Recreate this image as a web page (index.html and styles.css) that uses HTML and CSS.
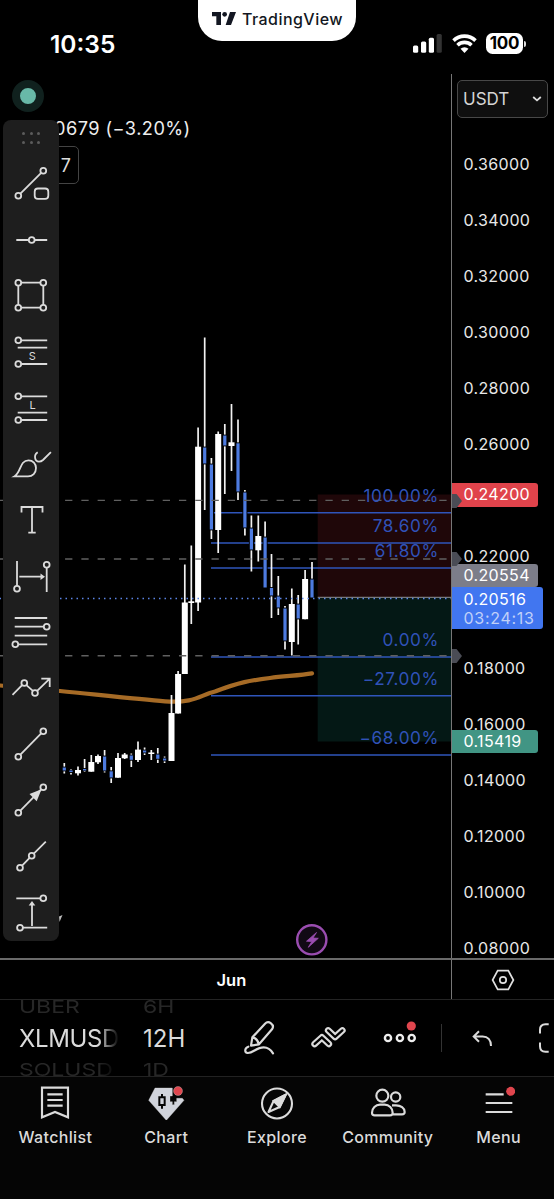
FILE: index.html
```
<!DOCTYPE html>
<html lang="en">
<head>
    <meta charset="UTF-8">
    <meta name="viewport" content="width=device-width, initial-scale=1.0">
    <title>XLMUSDT - TradingView</title>
    <link rel="stylesheet" href="styles.css">
</head>
<body>
    <div class="app">
        <header class="status-bar">
            <div class="time">10:35</div>
            <div class="brand">
                <svg width="24" height="13" viewBox="0 0 72 39"><path d="M0 0h27v39H13V13H0zM54 0h18L57 39H41z"/><circle cx="38" cy="7" r="7"/></svg>
                <span>TradingView</span>
            </div>
            <div class="indicators">
                <svg width="29" height="19" viewBox="0 0 29 19" fill="#fff">
                    <rect x="0" y="11.5" width="5.2" height="7.2" rx="1.5"/>
                    <rect x="8" y="7.5" width="5.2" height="11.2" rx="1.5"/>
                    <rect x="15.8" y="3.8" width="5.2" height="14.9" rx="1.5"/>
                    <rect x="23.6" y="0" width="5.2" height="18.7" rx="1.5" fill="#333"/>
                </svg>
                <svg class="wifi" width="25" height="19" viewBox="0 0 25 19" fill="none" stroke="#fff" stroke-width="3.6">
                    <path d="M1.5 6.6a15.8 15.8 0 0 1 22 0M5.5 11.2a10.2 10.2 0 0 1 14 0"/>
                    <path d="M12.5 18.9l-4-4.100a5.8 5.8 0 0 1 8 0z" fill="#fff" stroke="none"/>
                </svg>
                <div class="battery">100</div>
            </div>
        </header>

        <main class="chart">
            <div class="plot">
                <svg id="plot" width="451" height="884" viewBox="0 74 451 884">
                    <rect class="zone-stop" x="317.7" y="494.5" width="133.3" height="103"/>
                    <rect class="zone-target" x="317.7" y="598" width="133.3" height="143.5"/>
                    <path class="average" d="M0 685.5 C20 687 40 689 60 691 C100 695 140 699.5 165 701.3 C195 703.5 200 695 215 691.5 C240 682 250 680.5 270 678 C285 676 300 675.5 312 673.4"/>
                    <path class="fib-lines" d="M211 512.7H451M211 543.1H451M211 567.9H451M211 657H451M211 695.8H451M211 754.9H451"/>
                    <path class="entry" d="M317.7 597.4H451"/>
                    <g id="candles"></g>
                    <path class="alert-lines" d="M0 500.4H451M0 559H451M0 655.8H451"/>
                    <path class="last-price" d="M-.5 598.4H451"/>
                    <g class="fib-labels">
                        <text x="439" y="501.8">100.00%</text>
                        <text x="439" y="532.3">78.60%</text>
                        <text x="439" y="557.3">61.80%</text>
                        <text x="439" y="646">0.00%</text>
                        <text x="439" y="685">−27.00%</text>
                        <text x="439" y="744.2">−68.00%</text>
                    </g>
                    <circle cx="311.8" cy="939.8" r="14.6" fill="#110914" stroke="#9a4db0" stroke-width="2.4"/>
                    <path d="M316.5 932.5l-10 8.700 5.300.3-3.500 5.800 10-9-5.300-.3z" fill="#9a4db0" stroke="#9a4db0" stroke-width=".8"/>
                    <path d="M59 916.5l3.5-1.500-3 7z" fill="#bbb"/>
                </svg>
                <div class="live-dot"></div>
                <div class="change">0679 (−3.20%)</div>
                <div class="indicator-count">7</div>
            </div>

            <aside class="price-axis">
                <div class="currency">
                    <span>USDT</span>
                    <svg width="10" height="6" viewBox="0 0 10 6"><path d="M1.2 1l3.8 3.4L8.8 1" fill="none" stroke="#ddd" stroke-width="1.8"/></svg>
                </div>
                <div class="prices">
                    <span>0.36000</span>
                    <span>0.34000</span>
                    <span>0.32000</span>
                    <span>0.30000</span>
                    <span>0.28000</span>
                    <span>0.26000</span>
                    <span></span>
                    <span>0.22000</span>
                    <span></span>
                    <span>0.18000</span>
                    <span>0.16000</span>
                    <span>0.14000</span>
                    <span>0.12000</span>
                    <span>0.10000</span>
                    <span>0.08000</span>
                </div>
                <div class="tag tag-stop">0.24200</div>
                <div class="tag tag-entry">0.20554</div>
                <div class="tag tag-last">0.20516<span>03:24:13</span></div>
                <div class="tag tag-target">0.15419</div>
                <i class="marker marker-high"></i>
                <i class="marker marker-mid"></i>
                <i class="marker marker-low"></i>
            </aside>

            <div class="draw-tools">
                <div class="grip"><i></i><i></i><i></i><i></i><i></i><i></i></div>
                <svg viewBox="0 0 56 56"><path d="M17.4 37.6L38.2 16.8"/><circle cx="40.3" cy="14.7" r="2.9"/><circle cx="15.3" cy="39.7" r="2.9"/><rect x="31.7" y="32.5" width="13.6" height="10.4" rx="3.2"/></svg>
                <svg viewBox="0 0 56 56"><path d="M13.3 28h12.4M31.6 28h12.6"/><circle cx="28.7" cy="28" r="2.9"/></svg>
                <svg viewBox="0 0 56 56"><path d="M18.2 14.7h19.2M18.2 39.7h19.2M15.3 17.6v19.2M40.3 17.6v19.2"/><circle cx="15.3" cy="14.7" r="2.9"/><circle cx="40.3" cy="14.7" r="2.9"/><circle cx="15.3" cy="39.7" r="2.9"/><circle cx="40.3" cy="39.7" r="2.9"/></svg>
                <svg viewBox="0 0 56 56"><path d="M18.2 16.3h26M14.7 23.7h29.5M18.2 40h26"/><circle cx="15.3" cy="16.3" r="2.9"/><circle cx="15.3" cy="40" r="2.9"/><text x="29.4" y="36.3">S</text></svg>
                <svg viewBox="0 0 56 56"><path d="M18.2 16.3h26M14.7 32.7h29.5M18.2 40h26"/><circle cx="15.3" cy="16.3" r="2.9"/><circle cx="15.3" cy="40" r="2.9"/><text x="29.6" y="28.8">L</text></svg>
                <svg viewBox="0 0 56 56"><path d="M11.3 40.4C18.5 36 16.5 24.4 25.5 24.4c4.5 0 7.5 3.2 7.5 7.6 0 4.9-3.4 8.4-8 8.4zM34.7 16.3C30.5 19 31.5 25.5 36 25.7c1.8 0 2.900-.7 4-1.7l7.9-7.9"/></svg>
                <svg viewBox="0 0 56 56"><path d="M18.5 20.500V15h21v5.500M29 15v25.600M25.300 40.600h7.400"/></svg>
                <svg viewBox="0 0 56 56"><path d="M14 13v24.800M43.700 19.600V44M16.300 28.700H38"/><path class="solid" d="M37.500 25.500l4.500 3.200-4.500 3.200z"/><circle cx="14" cy="40.7" r="2.9"/><circle cx="43.7" cy="16.7" r="2.9"/></svg>
                <svg viewBox="0 0 56 56"><path d="M11.7 14h32.500M11.700 22.700h29M11.700 31.700h32.500M15.200 40.300h29"/><circle cx="43.7" cy="22.7" r="2.9"/><circle cx="12.3" cy="40.3" r="2.9"/></svg>
                <svg viewBox="0 0 56 56"><path d="M9.500 34.800l9.600-9.600M23.400 25.100l6.500 5.800M34.200 30.900L46.500 18.900M38.300 18.700h8.400V27"/><circle cx="21.3" cy="23" r="2.9"/><circle cx="32" cy="33" r="2.9"/></svg>
                <svg viewBox="0 0 56 56"><path d="M17.400 38.600l20.800-21.200"/><circle cx="15.3" cy="40.7" r="2.9"/><circle cx="40.3" cy="15.3" r="2.9"/></svg>
                <svg viewBox="0 0 56 56"><path d="M17.400 38.600l20.800-21.200"/><path class="solid" d="M38.500 17.300l-12 4.800 7.200 7.200z"/><circle cx="15.3" cy="40.7" r="2.9"/><circle cx="40.3" cy="15.3" r="2.9"/></svg>
                <svg viewBox="0 0 56 56"><path d="M19.100 37.600l7.500-7.700M30.800 25.600l12-12"/><circle cx="17" cy="39.7" r="2.9"/><circle cx="28.7" cy="27.7" r="2.9"/></svg>
                <svg viewBox="0 0 56 56"><path d="M13.300 14.300h24.100M19.900 43.700h24.300M29 42V20"/><path class="solid" d="M29 17l-3.300 4.500h6.600z"/><circle cx="40.3" cy="14.3" r="2.9"/><circle cx="17" cy="43.7" r="2.9"/></svg>
            </div>
        </main>

        <div class="time-axis">
            <div class="dates">Jun</div>
            <div class="axis-settings">
                <svg width="24" height="22" viewBox="0 0 24 22" fill="none" stroke="#e0e0e0" stroke-width="1.7"><path d="M6.700 1.700h10.600L22.400 11l-5.100 9.300H6.700L1.600 11z"/><circle cx="12" cy="11" r="3.2"/></svg>
            </div>
        </div>

        <div class="toolbar">
            <div class="picker symbol-picker">
                <span class="faded above">UBER</span>
                <span class="current">XLMUSD</span>
                <span class="faded below">SOLUSD</span>
            </div>
            <div class="picker interval-picker">
                <span class="faded above">6H</span>
                <span class="current">12H</span>
                <span class="faded below">1D</span>
            </div>
            <div class="actions">
                <svg class="pencil" width="32" height="36" viewBox="0 0 96 108" stroke-width="6.5" stroke-linejoin="round" stroke-linecap="round"><path d="M28 52L66 11q8-8 18-1 10 8 3 18L48 73l-24 4zM28 52q14 2 20 21M16 80C4 84 4 98 14 99c16 1 26-17 48-17 14 0 22 8 28 18"/></svg>
                <svg class="indicators-icon" width="37" height="24" viewBox="0 0 112 72">
                    <g stroke-linecap="round" stroke-linejoin="round">
                        <path d="M14 57l22-20 21 20" stroke-width="20"/><path d="M14 57l22-20 21 20" stroke-width="7" stroke="#000"/>
                        <path d="M55 16l21 20 22-20" stroke-width="20"/><path d="M55 16l21 20 22-20" stroke-width="7" stroke="#000"/>
                    </g>
                </svg>
                <svg class="more" width="34" height="28" viewBox="0 0 34 28" stroke-width="2.4"><circle cx="5" cy="18" r="3.1"/><circle cx="16.9" cy="18" r="3.1"/><circle cx="28.7" cy="18" r="3.1"/><circle cx="28.3" cy="6" r="4.6" fill="#e0464e" stroke="none"/></svg>
                <i class="divider"></i>
                <svg class="undo" width="20" height="17" viewBox="0 0 20 17" stroke-width="2"><path d="M7 1.300L1.700 6.500 7 11.700M1.700 6.500h9c5 0 8.300 3.500 8.300 9.500"/></svg>
                <svg class="fullscreen" width="10" height="30" viewBox="0 0 10 30" stroke-width="2"><path d="M9.700 1.200H6.500Q1 1.200 1 6.700V10.500M1 19.500v3.800q0 5.500 5.500 5.500h3.200"/></svg>
            </div>
        </div>

        <nav class="bottom-nav">
            <a>
                <svg width="30" height="35" viewBox="0 0 90 105" stroke-width="6.5"><path d="M6 8v89l39-16 39 16V8zM22 28h46M22 45h46M22 62h46"/></svg>
                <span>Watchlist</span>
            </a>
            <a>
                <svg width="38" height="35" viewBox="0 0 114 105" stroke="none">
                    <path d="M24 9h52v24h-7v17h7v9h6V50h7V40h17l5 6-53 60L5 46z" fill="#d1d4dc"/>
                    <path d="M45 27v10M45 61v10M37 37h16v23H37z" fill="none" stroke="#050505" stroke-width="6"/>
                    <circle cx="93" cy="18" r="13.5" fill="#e0464e"/>
                </svg>
                <span>Chart</span>
            </a>
            <a>
                <svg width="34" height="35" viewBox="0 0 34 35" stroke-width="2.1"><circle cx="17" cy="18.5" r="15"/><path d="M25.700 9.800L13.600 16 8.500 27l11.200-5z" stroke-linejoin="round"/><path d="M25.700 9.800L13.600 16l6.100 6z" fill="#dbdbdb"/></svg>
                <span>Explore</span>
            </a>
            <a>
                <svg width="36" height="35" viewBox="0 0 108 105" stroke-width="6.5"><circle cx="37" cy="32" r="18"/><circle cx="77" cy="36" r="14"/><path d="M14 91h46q8 0 8-8c0-14-11-24-24-24H30C17 59 6 69 6 83q0 8 8 8zM66 61h12c14 0 26 8 26 20q0 7-8 7H68"/></svg>
                <span>Community</span>
            </a>
            <a>
                <svg width="32" height="35" viewBox="0 0 96 105" stroke-width="6.5"><path d="M8 28h54M8 54h80M8 81h80"/><circle cx="83" cy="19" r="13.5" fill="#e0464e" stroke="none"/></svg>
                <span>Menu</span>
            </a>
        </nav>
    </div>

    <script src="chart.js"></script>
</body>
</html>
```
FILE: styles.css
```
* {
    box-sizing: border-box;
    margin: 0;
    padding: 0;
}

body {
    background-color: #000;
    color: #fff;
    font-family: Inter, 'Liberation Sans', sans-serif;
    overflow: hidden;
}

svg {
    display: block;
}

.app {
    width: 554px;
    height: 1199px;
    display: flex;
    flex-direction: column;
}

/* Status bar */
.status-bar {
    height: 74px;
    display: grid;
    grid-template-columns: 198px 158px 198px;
}

.time {
    padding: 29px 0 0 50px;
    font-size: 24.5px;
    line-height: 30px;
    font-weight: 600;
}

.brand {
    height: 41px;
    display: flex;
    align-items: center;
    padding: 0 0 4px 14px;
    gap: 6px;
    background-color: #fff;
    border-radius: 0 0 24px 24px;
    color: #131722;
    font-size: 16px;
    font-weight: 500;
    letter-spacing: 0.45px;
}

.brand svg {
    fill: #131722;
}

.indicators {
    display: flex;
    align-items: center;
    height: 21px;
    margin: 33px 0 0 57px;
}

.wifi {
    margin: 0 9px 0 10px;
}

.battery {
    position: relative;
    width: 37px;
    height: 21px;
    border-radius: 6.5px;
    background-color: #fff;
    color: #000;
    font-size: 17px;
    line-height: 21px;
    font-weight: 700;
    text-align: center;
    letter-spacing: -0.2px;
}

.battery::after {
    content: "";
    position: absolute;
    right: -3px;
    top: 8px;
    width: 2px;
    height: 6px;
    border-radius: 0 2px 2px 0;
    background-color: #ddd;
}

/* Chart */
.chart {
    position: relative;
    height: 884px;
    display: flex;
}

.plot {
    position: relative;
    width: 451px;
}

.zone-stop {
    fill: #1f0709;
}

.zone-target {
    fill: #041815;
}

.average {
    fill: none;
    stroke: #a66b26;
    stroke-width: 4.2;
    stroke-linecap: round;
}

.fib-lines {
    stroke: #2f55bb;
    stroke-width: 1.5;
}

.entry {
    stroke: #777;
    stroke-width: 1.3;
}

.alert-lines {
    stroke: #606060;
    stroke-width: 1.4;
    stroke-dasharray: 7.3 8.97;
}

.last-price {
    stroke: #5b84e6;
    stroke-width: 1.5;
    stroke-dasharray: 1.5 4;
}

.fib-labels {
    fill: #3052b8;
    font-size: 17.2px;
    letter-spacing: 0.6px;
    text-anchor: end;
}

.candle-up {
    fill: #fff;
}

.candle-down {
    fill: #4d7be0;
    stroke: #000;
    stroke-width: 1.8;
    paint-order: stroke;
}

.wick {
    stroke: #f2f2f2;
    stroke-width: 1.7;
}

.live-dot {
    position: absolute;
    left: 12px;
    top: 6px;
    width: 32px;
    height: 32px;
    border-radius: 50%;
    border: 8.5px solid #10211e;
    background-color: #68b9a8;
}

.change {
    position: absolute;
    left: 54px;
    top: 42px;
    font-size: 18.2px;
    line-height: 24px;
    letter-spacing: 0.45px;
    white-space: nowrap;
    color: #eee;
}

.indicator-count {
    position: absolute;
    left: 20px;
    top: 72px;
    width: 59px;
    height: 38px;
    padding-right: 7px;
    border: 1px solid #444;
    border-radius: 5px;
    font-size: 18px;
    line-height: 37px;
    text-align: right;
    color: #ddd;
}

/* Price axis */
.price-axis {
    position: relative;
    width: 103px;
    height: 884px;
    border-left: 1.5px solid #777;
    overflow: hidden;
    font-size: 16px;
    letter-spacing: 0.35px;
}

.currency {
    display: flex;
    align-items: center;
    justify-content: space-between;
    width: 91px;
    height: 38px;
    margin: 6px 0 0 5px;
    padding: 0 5px 0 5px;
    border: 1.5px solid #484848;
    border-radius: 5px;
    background-color: #0f0f0f;
    color: #d5d5d5;
    font-size: 17px;
    letter-spacing: 0;
}

.prices {
    display: flex;
    flex-direction: column;
    padding: 18px 0 0 11.5px;
}

.prices span {
    height: 56px;
    flex: none;
    line-height: 56px;
    color: #e8e8e8;
}

.tag {
    position: absolute;
    left: 0;
    width: 86px;
    height: 23px;
    padding-left: 11.5px;
    border-radius: 0 3px 3px 0;
    line-height: 23px;
}

.tag-stop {
    top: 409px;
    height: 24px;
    background-color: #e0434b;
}

.tag-entry {
    top: 490px;
    background-color: #7c7d89;
}

.tag-last {
    top: 513px;
    width: 91px;
    height: 42px;
    line-height: 24px;
    background-color: #4176f0;
}

.tag-last span {
    display: block;
    line-height: 15px;
    letter-spacing: 0.7px;
    color: #c0d0f8;
}

.tag-target {
    top: 656px;
    background-color: #419584;
}

.marker {
    position: absolute;
    left: 0;
    width: 10px;
    height: 14px;
    background-color: #4a4c55;
    clip-path: polygon(0 0, 45% 0, 100% 50%, 45% 100%, 0 100%);
}

.marker-high {
    top: 420px;
}

.marker-mid {
    top: 478px;
}

.marker-low {
    top: 575px;
}

/* Floating drawing tools */
.draw-tools {
    position: absolute;
    left: 3px;
    top: 46px;
    width: 56px;
    height: 821px;
    border-radius: 8px;
    background-color: #1e1e1e;
}

.draw-tools svg {
    width: 56px;
    height: 56px;
    fill: none;
    stroke: #dbdbdb;
    stroke-width: 1.8;
}

.draw-tools .solid {
    fill: #dbdbdb;
    stroke: none;
}

.draw-tools text {
    fill: #dbdbdb;
    stroke: none;
    font-size: 11px;
    text-anchor: middle;
}

.grip {
    display: grid;
    grid-template-columns: repeat(3, 3px);
    align-content: start;
    gap: 6px 4.6px;
    height: 36px;
    padding: 12px 0 0 19px;
}

.grip i {
    width: 3px;
    height: 3px;
    border-radius: 50%;
    background-color: #5c5c5c;
}

/* Time axis */
.time-axis {
    display: flex;
    height: 42px;
    border-top: 2px solid #6a6a6a;
    border-bottom: 1px solid #242424;
}

.dates {
    width: 451px;
    padding-left: 216.5px;
    font-size: 16.5px;
    line-height: 40px;
    font-weight: 600;
}

.axis-settings {
    width: 103px;
    padding: 9px 0 0 39px;
    border-left: 1.5px solid #777;
}

/* Toolbar */
.toolbar {
    height: 77px;
    display: flex;
    border-bottom: 1px solid #222;
    overflow: hidden;
}

.picker {
    display: flex;
    flex-direction: column;
    padding-left: 19px;
    width: 143px;
    font-size: 24px;
    color: #dbdbdb;
    white-space: nowrap;
}

.picker span {
    display: block;
    flex: none;
}

.picker .current {
    height: 42px;
    line-height: 44px;
    letter-spacing: -0.4px;
}

.picker .faded {
    font-size: 23px;
    color: #272727;
    transform: scaleY(0.78);
    height: 19px;
    line-height: 19px;
}

.picker .above {
    margin-top: -2px;
}

.picker .below {
    margin-top: 2px;
}

.symbol-picker {
    -webkit-mask-image: linear-gradient(to right, #000 98px, transparent 119px);
    mask-image: linear-gradient(to right, #000 98px, transparent 119px);
}

.interval-picker {
    width: 100px;
    padding-left: 0;
}

.interval-picker .current {
    letter-spacing: 0.1px;
}

.actions {
    display: flex;
    align-items: flex-start;
    width: 311px;
    fill: none;
    stroke: #dbdbdb;
}

.actions svg {
    flex: none;
}

.pencil {
    margin-top: 20px;
}

.indicators-icon {
    margin: 25px 0 0 35px;
}

.more {
    margin: 20px 0 0 36px;
    stroke: #eee;
}

.divider {
    width: 1px;
    height: 28px;
    margin: 24px 0 0 24px;
    background-color: #333;
}

.undo {
    margin: 30px 0 0 30px;
}

.fullscreen {
    margin: 23px 0 0 47px;
}

/* Bottom navigation */
.bottom-nav {
    flex: 1;
    display: flex;
    padding-top: 8px;
    background-color: #050505;
}

.bottom-nav a {
    flex: 1 1 0;
    display: flex;
    flex-direction: column;
    align-items: center;
    gap: 7px;
    font-size: 16px;
    line-height: 20px;
    font-weight: 500;
    letter-spacing: 0.35px;
    color: #dbdbdb;
}

.bottom-nav svg {
    fill: none;
    stroke: #dbdbdb;
}
```
FILE: chart.js
```
const SVG_NS = 'http://www.w3.org/2000/svg';

// x, high, body top, body bottom, low, direction
const candles = [
    [64.3, 763, 767.5, 770.5, 773.5, 'down'],
    [71, 769, 770.5, 772, 774.5, 'down'],
    [78, 766.5, 770, 773.3, 775.5, 'up'],
    [84.6, 759, 769, 770.5, 772, 'down'],
    [91.3, 755, 762, 771.7, 771.7, 'up'],
    [98, 754.5, 756, 762.3, 764, 'up'],
    [104.6, 750, 756.5, 770.5, 772.5, 'down'],
    [111.2, 767, 771.3, 777.5, 783, 'down'],
    [118, 753, 758, 777.7, 777.7, 'up'],
    [124.7, 753, 754.5, 758.3, 759, 'up'],
    [131.3, 753.5, 755.5, 759.8, 767, 'down'],
    [138, 741.5, 749.6, 760, 762, 'up'],
    [144.6, 747.5, 750.5, 752.5, 755, 'down'],
    [151.3, 750, 752.5, 754, 760, 'up'],
    [157.8, 748, 754.5, 758.8, 763, 'down'],
    [164.6, 756.5, 758.5, 760.5, 763, 'down'],
    [171.5, 695, 713, 761, 761, 'up'],
    [178.1, 671, 674, 713.5, 713.5, 'up'],
    [184.8, 564.5, 602.5, 674, 674, 'up'],
    [191.3, 545.5, 601.3, 603, 624, 'up'],
    [198.1, 427.5, 446.7, 602.5, 611, 'up'],
    [204.7, 337.5, 447.5, 463.5, 510, 'down'],
    [211.4, 458, 464.5, 529.5, 539, 'down'],
    [218.2, 431.5, 434, 530, 553, 'up'],
    [224.8, 424, 435.5, 445.5, 494, 'down'],
    [231.5, 404, 442.3, 446, 471, 'up'],
    [238, 419.5, 443.3, 491.5, 500, 'down'],
    [244.9, 490, 492.5, 527.5, 535.5, 'down'],
    [251.4, 515.5, 528.5, 549.5, 571.5, 'down'],
    [258.3, 515.5, 536, 550.3, 561.5, 'up'],
    [265.1, 521.5, 537.5, 587.5, 587.5, 'down'],
    [271.5, 554, 588, 595.5, 618, 'down'],
    [278.3, 576, 596.5, 607.5, 615, 'down'],
    [285, 606, 608.5, 640.5, 649.5, 'down'],
    [291.8, 588.5, 604, 642, 655.5, 'up'],
    [298.2, 595, 604.5, 618.5, 644.5, 'down'],
    [305.1, 570, 579, 619.2, 619.2, 'up'],
    [312, 562, 579.5, 597.5, 597.5, 'down']
];

const group = document.getElementById('candles');

function add(name, attrs) {
    const el = document.createElementNS(SVG_NS, name);
    Object.entries(attrs).forEach(([key, value]) => el.setAttribute(key, value));
    group.appendChild(el);
}

candles.forEach(([x, high, top, bottom, low, dir]) => {
    const width = dir === 'up' ? 6 : 3.2;
    add('path', { class: 'wick', d: `M${x} ${high}V${low}` });
    add('rect', {
        class: `candle-${dir}`,
        x: x - width / 2,
        y: top,
        width: width,
        height: bottom - top
    });
});
```
